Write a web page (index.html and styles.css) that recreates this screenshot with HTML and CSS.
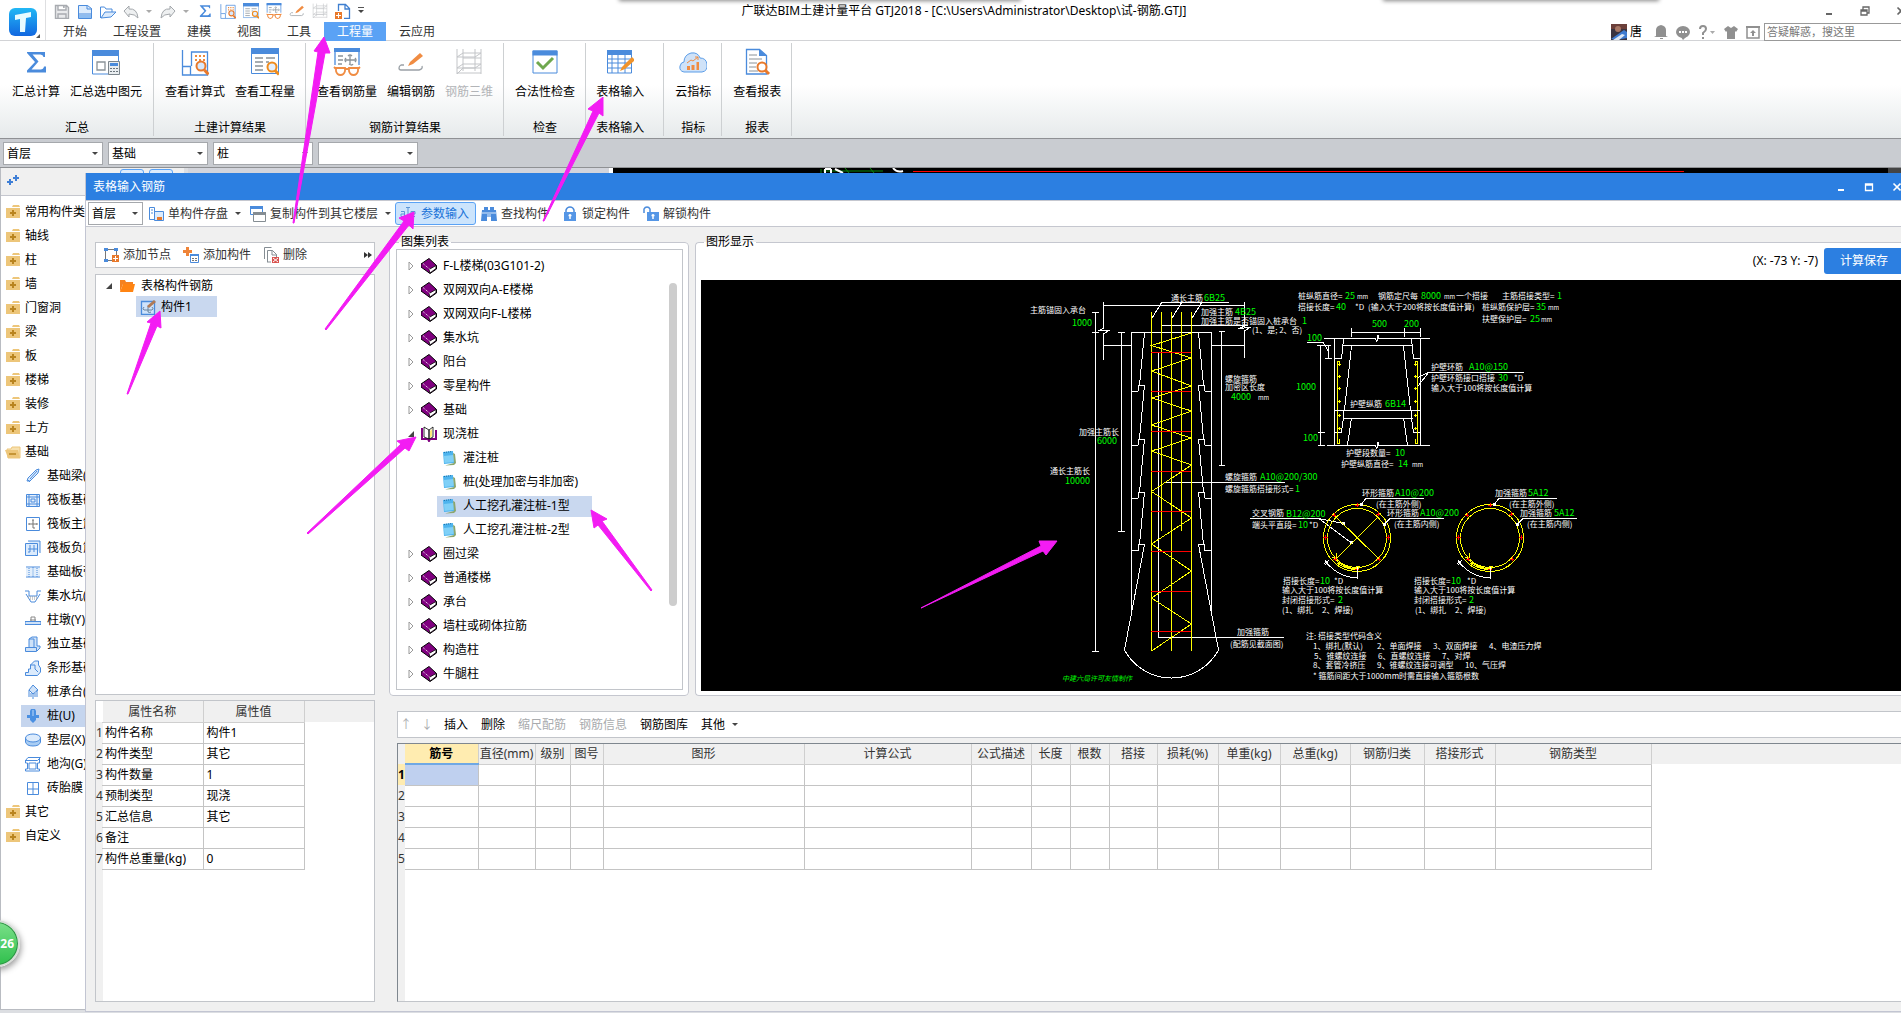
FILE: index.html
```
<!DOCTYPE html>
<html lang="zh-CN">
<head>
    <meta charset="UTF-8">
    <meta name="viewport" content="width=device-width, initial-scale=1.0">
    <title>广联达BIM土建计量平台 GTJ2018</title>
    <link rel="stylesheet" href="styles.css">
</head>
<body>
    <!-- icon library -->
    <svg class="defs" aria-hidden="true">
        <symbol id="i-sigma" viewBox="0 0 28 28"><path d="M5 4h18v5h-1.500q-.5-2.500-3-2.500h-8l6 7-7 8h9q3 0 3.500-3H24v6H5v-2l8-8.500-8-9z" fill="#4a8bdc"/></symbol>
        <symbol id="i-sumsel" viewBox="0 0 28 28"><path d="M.5 2.500h26V26h-26z" fill="#fff" stroke="#4a8bdc"/><path d="M0 2h27v6H0z" fill="#4a8bdc"/><path d="M5 14h8v8H5z" fill="none" stroke="#8a9298" stroke-width="1.300"/><path d="M16.500 13.500h11v13h-11z" fill="#e9edf0" stroke="#7b858c"/><path d="M18 15h8v3h-8z" fill="#4a8bdc"/><path d="M18 20h2v1h-2zm3 0h2v1h-2zm3 0h2v1h-2zm-6 3h2v1h-2zm3 0h2v1h-2zm3 0h2v1h-2z" fill="#6b757c"/></symbol>
        <symbol id="i-formula" viewBox="0 0 28 28"><path d="M1.500 2v25h25V4H10.500v14M2 18.500h7.500v8" fill="none" stroke="#4a8bdc" stroke-width="1.300"/><path d="M14 7h2v2h-2zm4 0h2v2h-2zm4 0h2v2h-2zm-8 4h2v2h-2zm4 0h2v2h-2zm4 0h2v2h-2z" fill="#ef8a3c"/><circle cx="20" cy="18" r="4.500" fill="#d8e8fb" stroke="#e8792b" stroke-width="2"/><path d="M23.500 22l4 4.500" stroke="#e8792b" stroke-width="3"/></symbol>
        <symbol id="i-quantity" viewBox="0 0 28 28"><path d="M.5.500h27v25H.5z" fill="#fff" stroke="#4a8bdc"/><path d="M0 0h28v6H0z" fill="#4a8bdc"/><path d="M4 10h8M4 14h8M4 18h8M4 22h8M15 10h9M15 14h3" stroke="#8a9298" stroke-width="1.300"/><circle cx="21" cy="19" r="4.500" fill="#e3f0ff" stroke="#ef8c1e" stroke-width="2"/><path d="M24 22.500l4 4" stroke="#ef8c1e" stroke-width="3"/></symbol>
        <symbol id="i-glasses" viewBox="0 0 28 28"><path d="M2 17V1h24v16" fill="#fff" stroke="#4a8bdc" stroke-width="1.300"/><path d="M1 0h26v4H1z" fill="#4a8bdc"/><path d="M5 8h5M5 12h5M5 16h4M17 8v8M13 12h9m-9-2q-2 2 0 4m9-4q2 2 0 4m-7-6q2-2 4 0m-3 8q3 2 4 0" stroke="#8a9298" stroke-width="1.300" fill="none"/><path d="M3 20h9v3q-1 4-4.500 4T3 23zm13 0h9v3q-1 4-4.500 4T16 23zm-4 1h4M3 21l-2-2m24 2l2-2" fill="#fff" stroke="#f08c42" stroke-width="1.800"/></symbol>
        <symbol id="i-editbar" viewBox="0 0 28 28"><path d="M7 17H4q-2 1-2 3t2 2h18q4-1 3-4" fill="none" stroke="#9aa0a6" stroke-width="1.300"/><path d="M11 18l2-4L23 5l3 3-10 8z" fill="#f08c42"/></symbol>
        <symbol id="i-mesh" viewBox="0 0 28 28"><path d="M2 1v25M8 1v22M20 1v22M26 1v25M2 9l6-4h18M2 20l6-4h18M2 9h18l6-4M2 20h18l6-4M2 25h24M8 10h18M2 26l6-6h18" fill="none" stroke="#c3c5c8" stroke-width="1"/></symbol>
        <symbol id="i-check" viewBox="0 0 28 28"><path d="M2 3h24v22H2z" fill="#fff" stroke="#4a8bdc"/><path d="M1.500 2.500h25v5h-25z" fill="#4a8bdc"/><path d="M6 14l6 6L22 10" fill="none" stroke="#6fa84f" stroke-width="3"/></symbol>
        <symbol id="i-sheet" viewBox="0 0 28 28"><path d="M1.500 3h24v22h-24zM6 3v22M12 3v22M19 3v22M1 11h25M1 15h25M1 20h25" fill="#fff" stroke="#4a8bdc"/><path d="M1 2h25v5H1z" fill="#4a8bdc"/><path d="M14 23l2-4L26 9l3 3-10 9z" fill="#f0932b"/></symbol>
        <symbol id="i-cloud" viewBox="0 0 28 28"><path d="M5 24q-5-1-4-6 1-4 4-4 0-7 7-9 7-1 9 5 6 0 7 6 1 7-5 8z" fill="#cfe2f8" stroke="#5b9de8"/><path d="M8 22v-4h3v4zm4.500 0v-5h3v5zm5 0v-8h2.500v8z" fill="#f08c42"/><path d="M8 15l4-3 2 1 5-4m-3 0h3v3" fill="none" stroke="#f08c42"/></symbol>
        <symbol id="i-report" viewBox="0 0 28 28"><path d="M3.500 1.500h13l7 6V26h-20z" fill="#fff" stroke="#4a8bdc" stroke-width="1.300"/><path d="M16 1l8 7h-8z" fill="#4a8bdc"/><path d="M6 7h8M6 11h13M6 15h8M6 19h7M6 23h9" stroke="#8a9298"/><circle cx="19" cy="19" r="4.500" fill="#fff" stroke="#e8792b" stroke-width="2"/><path d="M22 22l4 4" stroke="#e8792b" stroke-width="3"/></symbol>
        <symbol id="i-save" viewBox="0 0 16 16"><path d="M1.500 2.500h11l2 2v11h-13zM4 2v5h8V2M4 15v-4h8v4M9 4h1v1" fill="#e9eaec" stroke="#a8abb0" stroke-width="1.400"/></symbol>
        <symbol id="i-new" viewBox="0 0 16 16"><path d="M1.500 2.500h9l4 3v10h-13z" fill="#dcebfc" stroke="#4a8bdc"/><path d="M10 2v4h5M2 11h13" fill="none" stroke="#4a8bdc"/><path d="M2 12h12v3H2z" fill="#8dbcf0"/></symbol>
        <symbol id="i-open" viewBox="0 0 16 16"><path d="M.5 15V4h4l1.500 2h6v3" fill="none" stroke="#4a8bdc"/><path d="M1 15l4-6h11l-5 5z" fill="#dcebfc" stroke="#4a8bdc"/></symbol>
        <symbol id="i-undo" viewBox="0 0 16 16"><path d="M1 8l5-5v3q8-1 9 9-3-4-9-4v3z" fill="#eef0f1" stroke="#a3a7ab"/></symbol>
        <symbol id="i-redo" viewBox="0 0 16 16"><path d="M15 8l-5-5v3Q2 5 1 15q3-4 9-4v3z" fill="#eef0f1" stroke="#a3a7ab"/></symbol>
        <symbol id="i-adddoc" viewBox="0 0 16 16"><path d="M3.500 8V1.500h7l4 4v10H9M10 1v5h5" fill="none" stroke="#3f7fd0" stroke-width="1.300"/><path d="M0 9h7v7H0z" fill="#e8792b"/><path d="M3.500 10v5M1 12.500h5" stroke="#fff"/></symbol>
        <symbol id="i-folder" viewBox="0 0 16 16"><path d="M1 4h14v10H1zM8 1h6l1 2H7z" fill="#edc67a"/><path d="M8 6v6M5 9h6" stroke="#b98420" stroke-width="2"/></symbol>
        <symbol id="i-folder-open" viewBox="0 0 16 16"><path d="M2 5h4l1-2h8v11H3z" fill="#f7e0ae" stroke="#edc67a"/><path d="M0 6h13l2 8H3z" fill="#edc67a"/><path d="M4 10h7" stroke="#b98420" stroke-width="1.500"/></symbol>
        <symbol id="i-beam" viewBox="0 0 16 16"><path d="M2 13l1-3 8-8 3-1-1 4-8 8zM2 11l3 3M5 11l7-8" fill="#dcebfc" stroke="#4a8bdc"/></symbol>
        <symbol id="i-raft" viewBox="0 0 16 16"><path d="M1.500 2.500h13v12h-13zM4 2v13M12 2v13M1 5h14M1 12h14M6 7h4v3H6z" fill="#e6f0fc" stroke="#4a8bdc"/></symbol>
        <symbol id="i-main" viewBox="0 0 16 16"><path d="M1.500 1.500h13v13h-13z" fill="#fff" stroke="#4a8bdc"/><path d="M8 4v8M4 8h8M4 7v2m8-2v2M7 4h2m-1 8h2" stroke="#777" fill="none"/></symbol>
        <symbol id="i-neg" viewBox="0 0 16 16"><path d="M.5 3.500h12v12H.5zM3 1h12v12" fill="#dcebfc" stroke="#4a8bdc"/><path d="M5 5v7M9 5v7M3 9h9m-7 3H3" stroke="#4a8bdc"/></symbol>
        <symbol id="i-strip" viewBox="0 0 16 16"><path d="M1 3h14M1 13h14M8 3v10" stroke="#4a8bdc"/><path d="M1 4h14v8H1z" fill="#cfe2f8" opacity=".6"/><path d="M4 4v9m8-9v9" stroke="#4a8bdc" stroke-dasharray="1 1"/></symbol>
        <symbol id="i-pit" viewBox="0 0 16 16"><path d="M0 3h4v5h8V3h4M1 6l5 8h4l5-8" fill="none" stroke="#4a8bdc"/><path d="M3 9h10M5 11h7" stroke="#999" stroke-dasharray="1 1"/></symbol>
        <symbol id="i-pier" viewBox="0 0 16 16"><path d="M0 9.500h16v3H0z" fill="#cfe2f8" stroke="#4a8bdc"/><path d="M6 9V5h4v4M5 8h6" fill="none" stroke="#888"/></symbol>
        <symbol id="i-found" viewBox="0 0 16 16"><path d="M.5 11.500h11v4H.5zM4 11V3l3-2h5v9h3v2l-3 3M4 3h5v8" fill="#cfe2f8" stroke="#4a8bdc"/></symbol>
        <symbol id="i-bar" viewBox="0 0 16 16"><path d="M.5 15.500v-3h3V9h2V5l4-4h4v4l2 3v4l-3 3.500zM5 5h5v4l3 3" fill="#dcebfc" stroke="#4a8bdc"/></symbol>
        <symbol id="i-cap" viewBox="0 0 16 16"><path d="M8 1l5 5-5 4-4-4zM8 9v6M4 6v7m8-7v7M6 9v4m4-4v4" fill="#cfe2f8" stroke="#4a8bdc"/></symbol>
        <symbol id="i-pile" viewBox="0 0 16 16"><path d="M6 1h4l1 2v4h3v3h-3v2l-3 3-3-3v-2H2V7h3V3z" fill="#4a90e2"/><path d="M8 2v6" stroke="#bcd8f8"/></symbol>
        <symbol id="i-pad" viewBox="0 0 16 16"><path d="M.5 6v4q1 4 7.500 4t7.500-4V6" fill="#a9cdf3" stroke="#4a8bdc"/><ellipse cx="8" cy="6" rx="7.500" ry="4" fill="#dcebfc" stroke="#4a8bdc"/></symbol>
        <symbol id="i-ditch" viewBox="0 0 16 16"><path d="M.5 4.500L3 1.500h12.500l-3 3zM.5 4v3h2v6h-2v2h14v-2h-2V7h2V2M4 7h7v6H4z" fill="#fff" stroke="#4a8bdc"/></symbol>
        <symbol id="i-brick" viewBox="0 0 16 16"><path d="M2.500 2.500h11v12h-11zM8 2v12M2 9h12" fill="#fff" stroke="#4a8bdc"/></symbol>
        <symbol id="i-savecomp" viewBox="0 0 16 16"><path d="M1.500 1.500h5v12h-5zM3 4h2M3 7h2" fill="#fff" stroke="#4a8bdc"/><path d="M6.500 5.500h9v9h-9z" fill="#dcebfc" stroke="#4a8bdc"/><path d="M9 11h5v3H9z" fill="#e8792b"/></symbol>
        <symbol id="i-copy" viewBox="0 0 16 16"><path d="M.5.500h12v8H.5z" fill="#fff" stroke="#4a8bdc"/><path d="M0 0h13v3H0z" fill="#4a8bdc"/><path d="M3.500 6.500h12v9h-12z" fill="#fff" stroke="#858d93"/><path d="M3 6h13v3H3z" fill="#858d93"/></symbol>
        <symbol id="i-caret-text" viewBox="0 0 16 16"><path d="M1 5.500h3.500v5H1V8h3M10.500 8H15V5.500h-4v5h4M6 1.500h4M8 1.500v12M6 13.500h4" fill="none" stroke="#5b95d6"/></symbol>
        <symbol id="i-find" viewBox="0 0 16 16"><path d="M3 1h4v3h2V1h4v3h2l1 11h-6v-4H6v4H0L1 4h2z" fill="#4a8bdc"/><path d="M1 7h14M7 8v3m2-3v3" stroke="#dcebfc"/></symbol>
        <symbol id="i-lock" viewBox="0 0 16 16"><path d="M4 7V4q1-3 4-3t4 3v3" fill="none" stroke="#4a8bdc" stroke-width="1.500"/><path d="M2 6h12v9H2z" fill="#5596e6"/><path d="M8 8v5M6.500 9.500h3" stroke="#fff" stroke-width="1.500"/></symbol>
        <symbol id="i-unlock" viewBox="0 0 16 16"><path d="M1 7V3q1-2 3-2t3 2v4" fill="none" stroke="#4a8bdc" stroke-width="1.500"/><path d="M4 6h12v9H4z" fill="#5596e6"/><path d="M10 8v5M8.500 9.500h3" stroke="#fff" stroke-width="1.500"/></symbol>
        <symbol id="i-addnode" viewBox="0 0 16 16"><path d="M2.500 2.500h11v11h-11z" fill="none" stroke="#777"/><path d="M1 1h4v3H1zm10 0h4v3h-4zM1 12h4v3H1z" fill="#4a8bdc"/><path d="M9 8h7v7H9z" fill="#e8792b"/><path d="M12.500 9v5M10 11.500h5" stroke="#fff"/></symbol>
        <symbol id="i-addcomp" viewBox="0 0 16 16"><path d="M3 0h3v3h3v3H6v3H3V6H0V3h3z" fill="#ef8438"/><path d="M7.500 7.500h8v8h-8z" fill="#fff" stroke="#4a8bdc"/><path d="M7 7h9v2H7z" fill="#4a8bdc"/><path d="M9 11.500h5M9 13.500h5" stroke="#777" stroke-dasharray="2 1"/></symbol>
        <symbol id="i-del" viewBox="0 0 16 16"><path d="M1.500 12V.5h7M4.500 15V3.500h5l4 4V10M9 3v5h5M4 15h4" fill="none" stroke="#858d93"/><path d="M9 10h7v6H9z" fill="#d9534f"/><path d="M10 11l5 4m0-4l-5 4" stroke="#fff"/></symbol>
        <symbol id="i-orange" viewBox="0 0 16 16"><path d="M1 14V2h5l1 2h7v2H4z" fill="#f58220"/><path d="M4 6h12l-2 8H1z" fill="#ff8412"/></symbol>
        <symbol id="i-comp" viewBox="0 0 16 16"><path d="M1.500 2.500h13v13h-13z" fill="#cfe3fb" stroke="#4a8bdc" stroke-width="1.300"/><path d="M4 8q-2 2 0 3h8q2-1 0-3M8 7v6q2 1 3 0" fill="none" stroke="#68839c"/><path d="M7 7l7-6 2 2-7 6z" fill="#b07a56"/></symbol>
        <symbol id="i-book" viewBox="0 0 16 16"><path d="M0 6l8-5.500 7.500 7V11L9 15.500 0 9z" fill="#800080" stroke="#000"/><path d="M8 11.500l7-4v3L9 15z" fill="#fff" stroke="#000" stroke-width=".8"/><path d="M2 5.500l7 6" stroke="#fff" stroke-dasharray="1 1"/></symbol>
        <symbol id="i-bookopen" viewBox="0 0 16 16"><path d="M1 2v11h6l1 2 1-2h6V4" fill="#fff" stroke="#800080" stroke-width="2"/><path d="M3 1l5 3v9l-5-2zM8 4l4-3v10l-4 2z" fill="#fff" stroke="#000" stroke-width=".8"/><path d="M9 5l2-2v7l-2 2z" fill="#ffe97a"/></symbol>
        <symbol id="i-note" viewBox="0 0 16 16"><path d="M1 2l10-1 1 12-10 1z" fill="#4db4ee"/><path d="M11 3l2 1 1 9-2 2-9 .5L12 13z" fill="#8aa66f"/><path d="M2 6l9-1 .5 7-9 1z" fill="#7fd0f7"/><path d="M2 2.500l8-1" stroke="#1d6fa8" stroke-dasharray="1 1"/></symbol>
        <symbol id="i-right" viewBox="0 0 8 10"><path d="M2 1l4 4-4 4z" fill="#fff" stroke="#999"/></symbol>
        <symbol id="i-down" viewBox="0 0 8 10"><path d="M7 2v6H1z" fill="#444"/></symbol>
        <symbol id="i-min" viewBox="0 0 10 10"><path d="M2 7h6v2H2z" fill="currentColor"/></symbol>
        <symbol id="i-max" viewBox="0 0 10 10"><path d="M1.500 2h7v6.500h-7zM1 3h8" fill="none" stroke="currentColor" stroke-width="1.300"/></symbol>
        <symbol id="i-restore" viewBox="0 0 10 10"><path d="M1 4h6v5H1zM3 4V1h6v6H7M1 5h6" fill="none" stroke="currentColor" stroke-width="1.300"/></symbol>
        <symbol id="i-close" viewBox="0 0 10 10"><path d="M1.500 1.500l7 7M8.500 1.500l-7 7" stroke="currentColor" stroke-width="1.600"/></symbol>
    </svg>

    <div class="app">
        <div class="float-shadow shadow-left"></div>
        <div class="float-shadow shadow-right"></div>
        <header class="header">
            <button class="logo" aria-label="菜单">
                <svg viewBox="0 0 32 32">
                    <defs><linearGradient id="lg" x1="0" y1="0" x2="0" y2="1"><stop offset="0" stop-color="#22b8f5"/><stop offset="1" stop-color="#1167e0"/></linearGradient></defs>
                    <rect x="1" y="2" width="28" height="28" rx="6" fill="url(#lg)"/>
                    <path d="M7 9l16-3v5l-5 1-1 14h-5V13l-5 1z" fill="#e8fbff"/>
                    <path d="M32 28v4h-4z" fill="#555"/>
                </svg>
            </button>
            <div class="header-main">
                <div class="title-row">
                    <div class="quick">
                        <button aria-label="保存"><svg><use href="#i-save"/></svg></button>
                        <button aria-label="新建"><svg><use href="#i-new"/></svg></button>
                        <button aria-label="打开"><svg><use href="#i-open"/></svg></button>
                        <button aria-label="撤销"><svg><use href="#i-undo"/></svg></button>
                        <i class="caret pale"></i>
                        <button aria-label="恢复"><svg><use href="#i-redo"/></svg></button>
                        <i class="caret pale"></i>
                        <button aria-label="汇总"><svg><use href="#i-sigma"/></svg></button>
                        <button aria-label="查看计算式"><svg><use href="#i-formula"/></svg></button>
                        <button aria-label="查看工程量"><svg><use href="#i-quantity"/></svg></button>
                        <button aria-label="查看钢筋量"><svg><use href="#i-glasses"/></svg></button>
                        <button aria-label="编辑钢筋"><svg><use href="#i-editbar"/></svg></button>
                        <button aria-label="钢筋三维"><svg><use href="#i-mesh"/></svg></button>
                        <button aria-label="添加"><svg><use href="#i-adddoc"/></svg></button>
                        <i class="caret lined"></i>
                    </div>
                    <div class="title">广联达BIM土建计量平台 GTJ2018 - [C:\Users\Administrator\Desktop\试-钢筋.GTJ]</div>
                    <div class="window-buttons">
                        <button aria-label="最小化"><svg><use href="#i-min"/></svg></button>
                        <button aria-label="还原"><svg><use href="#i-restore"/></svg></button>
                        <button aria-label="关闭"><svg><use href="#i-close"/></svg></button>
                    </div>
                </div>
                <div class="tab-row">
                    <nav class="tabs">
                        <a href="#">开始</a>
                        <a href="#">工程设置</a>
                        <a href="#">建模</a>
                        <a href="#">视图</a>
                        <a href="#">工具</a>
                        <a href="#" class="active">工程量</a>
                        <a href="#">云应用</a>
                    </nav>
                    <div class="user-tools">
                        <svg width="16" height="16" viewBox="0 0 16 16"><path d="M0 0h16v16H0z" fill="#3a3440"/><path d="M0 0h16v5H0z" fill="#6b3f3a"/><circle cx="7" cy="5" r="3" fill="#a87866"/><path d="M0 15L13 6l3 2v6L6 16z" fill="#3f7bd0"/><path d="M2 16l9-6 3 1-6 5z" fill="#dfe8f4"/></svg>
                        <span class="user-name">唐</span>
                        <button aria-label="通知"><svg width="14" height="16" viewBox="0 0 14 16"><path d="M2 12V6q0-4 5-5 5 1 5 5v6l2 1H0zm4 2h3v1H6z" fill="#909090"/></svg></button>
                        <button aria-label="消息"><svg width="14" height="16" viewBox="0 0 14 16"><ellipse cx="7" cy="8" rx="7" ry="6" fill="#909090"/><path d="M5 13h5l-3 3z" fill="#909090"/><path d="M3 7h2v2H3zm3 0h2v2H6zm3 0h2v2H9z" fill="#fff"/></svg></button>
                        <button aria-label="帮助"><svg width="18" height="16" viewBox="0 0 18 16"><path d="M2 5q0-3 3-3t3 3q0 2-3 4v2m0 2v2" fill="none" stroke="#909090" stroke-width="2"/><path d="M12 7h5l-2.500 3z" fill="#aaa"/></svg></button>
                        <button aria-label="皮肤"><svg width="14" height="16" viewBox="0 0 14 16"><path d="M4 2l3 2 3-2 4 3-2 3-1-1v8H3V7L2 8 0 5z" fill="#909090"/></svg></button>
                        <button aria-label="收起"><svg width="14" height="16" viewBox="0 0 14 16"><path d="M1 3h12v11H1z" fill="none" stroke="#909090" stroke-width="1.500"/><path d="M0 2h14v2H0zM7 6l3 3H8v3H6V9H4z" fill="#909090"/></svg></button>
                        <input type="text" class="search" placeholder="答疑解惑，搜这里" aria-label="搜索">
                    </div>
                </div>
            </div>
        </header>

        <div class="ribbon">
            <section class="group first">
                <div class="tools">
                    <button><svg><use href="#i-sigma"/></svg>汇总计算</button>
                    <button><svg><use href="#i-sumsel"/></svg>汇总选中图元</button>
                </div>
                <h2>汇总</h2>
            </section>
            <section class="group">
                <div class="tools">
                    <button><svg><use href="#i-formula"/></svg>查看计算式</button>
                    <button><svg><use href="#i-quantity"/></svg>查看工程量</button>
                </div>
                <h2>土建计算结果</h2>
            </section>
            <section class="group">
                <div class="tools">
                    <button><svg><use href="#i-glasses"/></svg>查看钢筋量</button>
                    <button><svg><use href="#i-editbar"/></svg>编辑钢筋</button>
                    <button disabled><svg><use href="#i-mesh"/></svg>钢筋三维</button>
                </div>
                <h2>钢筋计算结果</h2>
            </section>
            <section class="group">
                <div class="tools"><button><svg><use href="#i-check"/></svg>合法性检查</button></div>
                <h2>检查</h2>
            </section>
            <section class="group wide">
                <div class="tools"><button><svg><use href="#i-sheet"/></svg>表格输入</button></div>
                <h2>表格输入</h2>
            </section>
            <section class="group">
                <div class="tools"><button><svg><use href="#i-cloud"/></svg>云指标</button></div>
                <h2>指标</h2>
            </section>
            <section class="group">
                <div class="tools"><button><svg><use href="#i-report"/></svg>查看报表</button></div>
                <h2>报表</h2>
            </section>
        </div>

        <div class="context-bar">
            <label class="combo"><select aria-label="楼层"><option>首层</option></select></label>
            <label class="combo"><select aria-label="构件大类"><option>基础</option></select></label>
            <label class="combo"><select aria-label="构件类型"><option>桩</option></select></label>
            <label class="combo"><select aria-label="构件"><option></option></select></label>
        </div>

        <main class="workspace">
            <aside class="sidebar">
                <div class="sidebar-head">
                    <svg width="14" height="14" viewBox="0 0 14 14"><path d="M4 5v6M1 8h6M10 1v6M7 4h6" stroke="#3f7fd6" stroke-width="2"/></svg>
                    <span class="mode"></span><span class="mode"></span>
                </div>
                <ul class="categories">
                    <li><svg><use href="#i-folder"/></svg>常用构件类</li>
                    <li><svg><use href="#i-folder"/></svg>轴线</li>
                    <li><svg><use href="#i-folder"/></svg>柱</li>
                    <li><svg><use href="#i-folder"/></svg>墙</li>
                    <li><svg><use href="#i-folder"/></svg>门窗洞</li>
                    <li><svg><use href="#i-folder"/></svg>梁</li>
                    <li><svg><use href="#i-folder"/></svg>板</li>
                    <li><svg><use href="#i-folder"/></svg>楼梯</li>
                    <li><svg><use href="#i-folder"/></svg>装修</li>
                    <li><svg><use href="#i-folder"/></svg>土方</li>
                    <li><svg><use href="#i-folder-open"/></svg>基础</li>
                    <li class="sub"><svg><use href="#i-beam"/></svg>基础梁(F)</li>
                    <li class="sub"><svg><use href="#i-raft"/></svg>筏板基础(M)</li>
                    <li class="sub"><svg><use href="#i-main"/></svg>筏板主筋(R)</li>
                    <li class="sub"><svg><use href="#i-neg"/></svg>筏板负筋(X)</li>
                    <li class="sub"><svg><use href="#i-strip"/></svg>基础板带(W)</li>
                    <li class="sub"><svg><use href="#i-pit"/></svg>集水坑(K)</li>
                    <li class="sub"><svg><use href="#i-pier"/></svg>柱墩(Y)</li>
                    <li class="sub"><svg><use href="#i-found"/></svg>独立基础(D)</li>
                    <li class="sub"><svg><use href="#i-bar"/></svg>条形基础(T)</li>
                    <li class="sub"><svg><use href="#i-cap"/></svg>桩承台(V)</li>
                    <li class="sub selected"><svg><use href="#i-pile"/></svg>桩(U)</li>
                    <li class="sub"><svg><use href="#i-pad"/></svg>垫层(X)</li>
                    <li class="sub"><svg><use href="#i-ditch"/></svg>地沟(G)</li>
                    <li class="sub"><svg><use href="#i-brick"/></svg>砖胎膜</li>
                    <li><svg><use href="#i-folder"/></svg>其它</li>
                    <li><svg><use href="#i-folder"/></svg>自定义</li>
                </ul>
            </aside>
            <div class="list-panel"></div>
            <div class="model-view">
                <svg width="1275" height="5" viewBox="0 0 1275 5">
                    <path d="M208 1v4M210 3h60M232 0l4 5M257 0l4 5" stroke="#0a8a0a" fill="none"/>
                    <path d="M212 1h6M212 1v4M218 1v4M222 1l8 4M280 0q4 5 10 3" stroke="#fff" stroke-width="2" fill="none"/>
                    <path d="M300 3.500h771" stroke="#f00"/>
                </svg>
            </div>
        </main>
    </div>

    <!-- 表格输入钢筋 window -->
    <section class="dialog">
        <div class="dialog-title">
            <h1>表格输入钢筋</h1>
            <div class="dialog-buttons">
                <button aria-label="最小化"><svg><use href="#i-min"/></svg></button>
                <button aria-label="最大化"><svg><use href="#i-max"/></svg></button>
                <button aria-label="关闭"><svg><use href="#i-close"/></svg></button>
            </div>
        </div>
        <div class="dialog-tools">
            <label class="combo small"><select aria-label="楼层"><option>首层</option></select></label>
            <button><svg><use href="#i-savecomp"/></svg>单构件存盘<i class="caret"></i></button>
            <button><svg><use href="#i-copy"/></svg>复制构件到其它楼层<i class="caret"></i></button>
            <button class="on"><svg><use href="#i-caret-text"/></svg>参数输入</button>
            <button class="lone"><svg><use href="#i-find"/></svg>查找构件</button>
            <button class="lone"><svg><use href="#i-lock"/></svg>锁定构件</button>
            <button class="lone"><svg><use href="#i-unlock"/></svg>解锁构件</button>
        </div>
        <div class="dialog-body">
            <div class="left-col">
                <div class="box node-tools">
                    <button><svg><use href="#i-addnode"/></svg>添加节点</button>
                    <button><svg><use href="#i-addcomp"/></svg>添加构件</button>
                    <button><svg><use href="#i-del"/></svg>删除</button>
                    <svg class="more" width="8" height="8" viewBox="0 0 8 8"><path d="M0 1l4 3-4 3zM4 1l4 3-4 3z" fill="#333"/></svg>
                </div>
                <div class="box comp-tree">
                    <div class="node root"><svg class="twist"><use href="#i-down"/></svg><svg><use href="#i-orange"/></svg>表格构件钢筋</div>
                    <div class="node child"><svg><use href="#i-comp"/></svg>构件1</div>
                </div>
                <div class="box props">
                    <table>
                        <colgroup><col class="c-no"><col class="c-name"><col class="c-value"></colgroup>
                        <thead><tr><th></th><th>属性名称</th><th>属性值</th></tr></thead>
                        <tbody>
                            <tr><th>1</th><td>构件名称</td><td>构件1</td></tr>
                            <tr><th>2</th><td>构件类型</td><td>其它</td></tr>
                            <tr><th>3</th><td>构件数量</td><td>1</td></tr>
                            <tr><th>4</th><td>预制类型</td><td>现浇</td></tr>
                            <tr><th>5</th><td>汇总信息</td><td>其它</td></tr>
                            <tr><th>6</th><td>备注</td><td></td></tr>
                            <tr><th>7</th><td>构件总重量(kg)</td><td>0</td></tr>
                        </tbody>
                    </table>
                </div>
            </div>
            <div class="right-col">
                <div class="upper">
                    <fieldset class="atlas">
                        <legend>图集列表</legend>
                        <div class="atlas-box">
                            <ul>
                                <li><svg class="twist"><use href="#i-right"/></svg><svg><use href="#i-book"/></svg>F-L楼梯(03G101-2)</li>
                                <li><svg class="twist"><use href="#i-right"/></svg><svg><use href="#i-book"/></svg>双网双向A-E楼梯</li>
                                <li><svg class="twist"><use href="#i-right"/></svg><svg><use href="#i-book"/></svg>双网双向F-L楼梯</li>
                                <li><svg class="twist"><use href="#i-right"/></svg><svg><use href="#i-book"/></svg>集水坑</li>
                                <li><svg class="twist"><use href="#i-right"/></svg><svg><use href="#i-book"/></svg>阳台</li>
                                <li><svg class="twist"><use href="#i-right"/></svg><svg><use href="#i-book"/></svg>零星构件</li>
                                <li><svg class="twist"><use href="#i-right"/></svg><svg><use href="#i-book"/></svg>基础</li>
                                <li><svg class="twist"><use href="#i-down"/></svg><svg><use href="#i-bookopen"/></svg>现浇桩</li>
                                <li class="leaf"><span><svg><use href="#i-note"/></svg>灌注桩</span></li>
                                <li class="leaf"><span><svg><use href="#i-note"/></svg>桩(处理加密与非加密)</span></li>
                                <li class="leaf selected"><span><svg><use href="#i-note"/></svg>人工挖孔灌注桩-1型</span></li>
                                <li class="leaf"><span><svg><use href="#i-note"/></svg>人工挖孔灌注桩-2型</span></li>
                                <li><svg class="twist"><use href="#i-right"/></svg><svg><use href="#i-book"/></svg>圈过梁</li>
                                <li><svg class="twist"><use href="#i-right"/></svg><svg><use href="#i-book"/></svg>普通楼梯</li>
                                <li><svg class="twist"><use href="#i-right"/></svg><svg><use href="#i-book"/></svg>承台</li>
                                <li><svg class="twist"><use href="#i-right"/></svg><svg><use href="#i-book"/></svg>墙柱或砌体拉筋</li>
                                <li><svg class="twist"><use href="#i-right"/></svg><svg><use href="#i-book"/></svg>构造柱</li>
                                <li><svg class="twist"><use href="#i-right"/></svg><svg><use href="#i-book"/></svg>牛腿柱</li>
                            </ul>
                            <div class="scroll"><div class="thumb"></div></div>
                        </div>
                    </fieldset>
                    <fieldset class="figure">
                        <legend>图形显示</legend>
                        <div class="figure-head">
                            <span>(X: -73 Y: -7)</span>
                            <button class="primary">计算保存</button>
                        </div>
                        <div class="canvas">
                            <svg class="cad" width="1201" height="411" viewBox="700 280 1201 411">
                                <defs>
                                    <!-- half of the pile casing, mirrored for the other side -->
                                    <g id="casing">
                                        <path d="M1130.500 610V332.500H1170M1143.500 333l-5 52M1143.500 385h-5.500l-1 6h-6.500M1143.500 385l-5 54M1143.500 439h-5.500l-1 6h-6.500M1143.500 439l-5 53M1143.500 492h-5.500l-1 6h-6.500M1143.500 492l-5 53M1143.500 544.500h-5.500l-1 6h-6.500M1143.500 544.500l-20 105.500"/>
                                    </g>
                                    <g id="wall">
                                        <path d="M1333.500 338v107M1342.500 339l-2 19.500h-7M1350.500 346l-7 64M1342.500 410v8M1342.500 418l-2 14h-7M1350.500 418l-4 27"/>
                                        <path class="y" d="M1336.500 361v82h2v-4M1336.500 361h2v3M1337 364h3M1337 376.500h3M1337 388.500h3M1337 401.500h3M1337 415.500h3M1337 428.500h3M1338.500 363v3M1338.500 375v3M1338.500 387v3M1338.500 400v3M1338.500 414v3M1338.500 427v3"/>
                                    </g>
                                    <g id="ring">
                                        <circle class="y" cx="1356" cy="538" r="33.500"/>
                                        <circle class="y" cx="1356" cy="538" r="29.500"/>
                                        <path class="y" d="M1332 557q10 12 26 12M1331 557h4v-4M1355 566h4l-2 4M1336 563q8 6 20 7"/>
                                        <path class="r" d="M1354 505h4M1356 503v4M1375 514.500h4M1377 512v4M1385 537.500h4M1387 535v5M1376 559.500h4M1378.500 557v4M1354 569.500h4M1356 567v4M1332 559.500h4M1334 557v4M1322 537.500h5M1324.500 535v5M1331 515.500h4M1333 513v4"/>
                                        <path d="M1325 562q12 15 31.500 16M1323 564l4-3M1327 565l-3-5M1356.500 567v12M1328 560l-4 5M1365 498.500l-5 6M1389 518.500l-6 6M1365 498.500h58M1389 518.500h54"/>
                                        <path class="dot" d="M1359 503h3v3h-3zM1382 523h3v3h-3z"/>
                                    </g>
                                </defs>
                                <g class="w">
                                    <use href="#casing"/>
                                    <use href="#casing" transform="translate(2341 0) scale(-1 1)"/>
                                    <path d="M1123.500 650A53.400 53.400 0 0 0 1217.500 650"/>
                                    <path d="M1102 305.500h142M1102.500 302v26l-5 3 11-1-6 4v26M1243.500 302v24l-6 3 12-2-6 4v27M1102 345.500h28M1211 345.500h32"/>
                                    <path d="M1094.500 312v339M1091 312.500h7M1091 332.500h7M1091 651.500h7M1120.500 332v199M1117 332.500h7M1117 531.500h7M1220.500 331v134M1218 331.500h6M1218 465.500h6"/>
                                    <path d="M1160 302.500h68M1161 302l-10 16M1181 302l-10 16M1201 302l-10 16M1160 325.500h87M1157.500 352v285.500h125.500M1163 482.500h121"/>
                                    <path d="M1249 518.500h69M1318 518.500l24 5M1318 518.500l32 24M1428 372.500h95M1428 372l-12 6M1428 372l-11 14"/>
                                    <path class="dot" d="M1341 522h3v3h-3zM1349 541h3v3h-3z"/>
                                    <use href="#wall"/>
                                    <use href="#wall" transform="translate(2753 0) scale(-1 1)"/>
                                    <path d="M1350 332.500h70M1350.500 328v9M1403.500 328v9M1419.500 328v9M1323 338.500h51l2 3 1-6 1 3h51M1341 345.500h71M1334 410.500h85M1342 418.500h70M1326 445.500h48l2 3 1-6 1 3h51"/>
                                    <path d="M1319.500 345v100M1316 345.500h14M1317 432.500h7M1317 445.500h7M1327.500 345v13M1324 358.500h7M1306 342.500h16l5 8"/>
                                </g>
                                <path class="y" d="M1150.500 312v339M1190.500 312v339M1170.500 312v339M1160.500 312v219M1180.500 312v219"/>
                                <path class="y" d="M1190.500 333l-40 12.500 40 12.500-40 13 40 15-40 12 40 13-40 14 40 13-40 13 40 14-40 26.500 40 26.500-40 26 40 27-40 27 40 26-40 27"/>
                                <path class="r" d="M1150 352.500h40M1150 391.500h40M1150 431.500h40M1150 471.500h40M1150 511.500h40M1150 551.500h40M1150 591.500h40M1150 631.500h40"/>
                                <path class="y" d="M1377 517l-43 43M1333 515l46 45"/>
                                <g class="w">
                                    <use href="#ring"/>
                                    <use href="#ring" x="133"/>
                                </g>
                                <g class="note">
                                    <text x="1170" y="301">通长主筋</text>
                                    <text x="1029" y="313">主筋锚固入承台</text>
                                    <text x="1200" y="315">加强主筋</text>
                                    <text x="1200" y="324">加强主筋是否锚固入桩承台</text>
                                    <text x="1251" y="333">(1、是; 2、否)</text>
                                    <text x="1224" y="382">螺旋箍筋</text>
                                    <text x="1224" y="390">加密区长度</text>
                                    <text class="unit" x="1257" y="400">mm</text>
                                    <text x="1078" y="435">加强主筋长</text>
                                    <text x="1049" y="474">通长主筋长</text>
                                    <text x="1224" y="480">螺旋箍筋</text>
                                    <text x="1224" y="492">螺旋箍筋搭接形式=</text>
                                    <text x="1251" y="516">交叉钢筋</text>
                                    <text x="1251" y="528">端头平直段=</text>
                                    <text x="1308" y="528">*D</text>
                                    <text x="1236" y="635">加强箍筋</text>
                                    <text x="1229" y="647">(配筋见截面图)</text>
                                    <text x="1297" y="299">桩纵筋直径=</text>
                                    <text class="unit" x="1356" y="299">mm</text>
                                    <text x="1377" y="299">钢筋定尺每</text>
                                    <text class="unit" x="1443" y="299">mm</text>
                                    <text x="1455" y="299">一个搭接</text>
                                    <text x="1501" y="299">主筋搭接类型=</text>
                                    <text x="1297" y="310">搭接长度=</text>
                                    <text x="1354" y="310">*D</text>
                                    <text x="1367" y="310">(输入大于200将按长度值计算)</text>
                                    <text x="1481" y="310">桩纵筋保护层=</text>
                                    <text class="unit" x="1547" y="310">mm</text>
                                    <text x="1481" y="322">扶壁保护层=</text>
                                    <text class="unit" x="1540" y="322">mm</text>
                                    <text x="1349" y="407">护壁纵筋</text>
                                    <text x="1345" y="456">护壁段数量=</text>
                                    <text x="1340" y="467">护壁纵筋直径=</text>
                                    <text class="unit" x="1411" y="467">mm</text>
                                    <text x="1430" y="370">护壁环筋</text>
                                    <text x="1430" y="381">护壁环筋接口搭接</text>
                                    <text x="1513" y="381">*D</text>
                                    <text x="1430" y="391">输入大于100将按长度值计算</text>
                                    <text x="1361" y="496">环形箍筋</text>
                                    <text x="1375" y="507">(在主筋外侧)</text>
                                    <text x="1386" y="516">环形箍筋</text>
                                    <text x="1393" y="527">(在主筋内侧)</text>
                                    <text x="1494" y="496">加强箍筋</text>
                                    <text x="1508" y="507">(在主筋外侧)</text>
                                    <text x="1519" y="516">加强箍筋</text>
                                    <text x="1526" y="527">(在主筋内侧)</text>
                                    <text x="1282" y="584">搭接长度=</text>
                                    <text x="1333" y="584">*D</text>
                                    <text x="1281" y="593">输入大于100将按长度值计算</text>
                                    <text x="1281" y="603">封闭搭接形式=</text>
                                    <text x="1281" y="613">(1、绑扎</text>
                                    <text x="1321" y="613">2、焊接)</text>
                                    <text x="1413" y="584">搭接长度=</text>
                                    <text x="1466" y="584">*D</text>
                                    <text x="1413" y="593">输入大于100将按长度值计算</text>
                                    <text x="1413" y="603">封闭搭接形式=</text>
                                    <text x="1414" y="613">(1、绑扎</text>
                                    <text x="1454" y="613">2、焊接)</text>
                                    <text x="1305" y="639">注: 搭接类型代码含义</text>
                                    <text x="1312" y="649">1、绑扎(默认)</text>
                                    <text x="1376" y="649">2、单面焊接</text>
                                    <text x="1432" y="649">3、双面焊接</text>
                                    <text x="1488" y="649">4、电渣压力焊</text>
                                    <text x="1313" y="659">5、锥螺纹连接</text>
                                    <text x="1377" y="659">6、直螺纹连接</text>
                                    <text x="1441" y="659">7、对焊</text>
                                    <text x="1312" y="668">8、套管冷挤压</text>
                                    <text x="1376" y="668">9、锥螺纹连接可调型</text>
                                    <text x="1464" y="668">10、气压焊</text>
                                    <text x="1312" y="679">* 箍筋间距大于1000mm时需直接输入箍筋根数</text>
                                </g>
                                <g class="value">
                                    <text x="1203" y="301">6B25</text>
                                    <text x="1071" y="326">1000</text>
                                    <text x="1234" y="315">4B25</text>
                                    <text x="1301" y="324">1</text>
                                    <text x="1230" y="400">4000</text>
                                    <text x="1096" y="444">6000</text>
                                    <text x="1064" y="484">10000</text>
                                    <text x="1259" y="480">A10@200/300</text>
                                    <text x="1294" y="492">1</text>
                                    <text x="1285" y="517">B12@200</text>
                                    <text x="1297" y="528">10</text>
                                    <text x="1344" y="299">25</text>
                                    <text x="1420" y="299">8000</text>
                                    <text x="1556" y="299">1</text>
                                    <text x="1335" y="310">40</text>
                                    <text x="1535" y="310">35</text>
                                    <text x="1529" y="322">25</text>
                                    <text x="1371" y="327">500</text>
                                    <text x="1403" y="327">200</text>
                                    <text x="1306" y="341">100</text>
                                    <text x="1295" y="390">1000</text>
                                    <text x="1302" y="441">100</text>
                                    <text x="1384" y="407">6B14</text>
                                    <text x="1394" y="456">10</text>
                                    <text x="1397" y="467">14</text>
                                    <text x="1468" y="370">A10@150</text>
                                    <text x="1497" y="381">30</text>
                                    <text x="1394" y="496">A10@200</text>
                                    <text x="1419" y="516">A10@200</text>
                                    <text x="1527" y="496">5A12</text>
                                    <text x="1553" y="516">5A12</text>
                                    <text x="1319" y="584">10</text>
                                    <text x="1337" y="603">2</text>
                                    <text x="1450" y="584">10</text>
                                    <text x="1468" y="603">2</text>
                                    <text class="sign" x="1061" y="681">中建六局许可友情制作</text>
                                </g>
                            </svg>
                        </div>
                    </fieldset>
                </div>
                <div class="lower">
                    <div class="box row-tools">
                        <button class="arrow" disabled>↑</button>
                        <button class="arrow" disabled>↓</button>
                        <button>插入</button>
                        <button>删除</button>
                        <button disabled>缩尺配筋</button>
                        <button disabled>钢筋信息</button>
                        <button>钢筋图库</button>
                        <button>其他<i class="caret"></i></button>
                    </div>
                    <div class="rebar">
                        <table>
                            <colgroup>
                                <col><col><col><col><col><col><col><col><col><col><col><col><col><col><col><col><col>
                            </colgroup>
                            <thead>
                                <tr>
                                    <th></th><th class="current">筋号</th><th>直径(mm)</th><th>级别</th><th>图号</th><th>图形</th><th>计算公式</th><th>公式描述</th><th>长度</th><th>根数</th><th>搭接</th><th>损耗(%)</th><th>单重(kg)</th><th>总重(kg)</th><th>钢筋归类</th><th>搭接形式</th><th>钢筋类型</th>
                                </tr>
                            </thead>
                            <tbody>
                                <tr><th class="current">1</th><td class="current"></td><td></td><td></td><td></td><td></td><td></td><td></td><td></td><td></td><td></td><td></td><td></td><td></td><td></td><td></td><td></td></tr>
                                <tr><th>2</th><td></td><td></td><td></td><td></td><td></td><td></td><td></td><td></td><td></td><td></td><td></td><td></td><td></td><td></td><td></td><td></td></tr>
                                <tr><th>3</th><td></td><td></td><td></td><td></td><td></td><td></td><td></td><td></td><td></td><td></td><td></td><td></td><td></td><td></td><td></td><td></td></tr>
                                <tr><th>4</th><td></td><td></td><td></td><td></td><td></td><td></td><td></td><td></td><td></td><td></td><td></td><td></td><td></td><td></td><td></td><td></td></tr>
                                <tr><th>5</th><td></td><td></td><td></td><td></td><td></td><td></td><td></td><td></td><td></td><td></td><td></td><td></td><td></td><td></td><td></td><td></td></tr>
                            </tbody>
                        </table>
                    </div>
                </div>
            </div>
        </div>
    </section>

    <div class="ball">26</div>

    <!-- tutorial arrows -->
    <svg class="arrows" width="1100" height="640" viewBox="0 0 1100 640">
        <path d="M293 223L318 52l-4-1 10-14 6 16-5 0-31 170z"/>
        <path d="M543 221L593 111l-5-2 15-12 0 19-4-3-55 108z"/>
        <path d="M325 329L404 221l-5-3 15-6-1 17-4-4-83 105z"/>
        <path d="M127 394L151 323l-4-1 13-11 1 17-4-2-29 68z"/>
        <path d="M307 533L401 444l-4-3 19-4-7 14-4-3-97 86z"/>
        <path d="M651 591L598 525l-4 3-3-18 16 9-5 2 50 69z"/>
        <path d="M921 608L1041 546l-2-5 18 0-11 14-3-4-122 57z"/>
    </svg>
</body>
</html>
```
FILE: styles.css
```
* {
    box-sizing: border-box;
}

body {
    margin: 0;
    height: 100vh;
    overflow: hidden;
    position: relative;
    font-family: "Noto Sans", "Noto Sans CJK SC", sans-serif;
    font-size: 12px;
    line-height: 16px;
    color: #000;
    background-color: #dcdee2;
}

button {
    display: flex;
    align-items: center;
    padding: 0;
    border: none;
    background: none;
    font: inherit;
    color: inherit;
    white-space: nowrap;
}

button svg,
li svg,
.node svg {
    width: 16px;
    height: 16px;
    flex: none;
}

h1,
h2 {
    margin: 0;
    font-size: 12px;
    font-weight: normal;
}

ul {
    margin: 0;
    padding: 0;
    list-style: none;
}

.defs {
    display: none;
}

.app {
    display: flex;
    flex-direction: column;
    height: 100%;
}

.caret {
    width: 0;
    height: 0;
    border: 3px solid transparent;
    border-top-color: #444;
    border-bottom: none;
}

.caret.pale {
    border-top-color: #aaa;
}

.caret.lined {
    position: relative;
}

.caret.lined::before {
    content: "";
    position: absolute;
    left: -3px;
    top: -6px;
    width: 6px;
    height: 1px;
    background-color: #555;
}

/* header */
.float-shadow {
    position: absolute;
    top: -8px;
    height: 8px;
    box-shadow: 0 1px 4px #888;
}

.shadow-left {
    left: 619px;
    width: 402px;
}

.shadow-right {
    left: 1383px;
    width: 276px;
}

.header {
    display: flex;
    height: 41px;
    background-color: #fff;
    border-bottom: 1px solid #d2d3d6;
}

.logo {
    width: 46px;
    padding: 4px 0 0 8px;
    border-right: 1px solid #dedfe1;
}

.logo svg {
    width: 32px;
    height: 32px;
}

.header-main {
    flex: 1;
    min-width: 0;
}

.title-row {
    display: flex;
    height: 22px;
    align-items: center;
}

.quick {
    flex: 1;
    display: flex;
    align-items: center;
    gap: 7px;
    padding-left: 8px;
}

.quick .caret {
    margin-right: 1px;
}

.window-buttons {
    flex: 1;
    display: flex;
    justify-content: flex-end;
    gap: 26px;
    padding-left: 32px;
    margin-right: -5px;
    color: #666;
}

.window-buttons svg,
.dialog-buttons svg {
    width: 10px;
    height: 10px;
}

.title-row .title {
    white-space: nowrap;
}

.tab-row {
    display: flex;
    justify-content: space-between;
}

.tabs {
    display: flex;
    padding-left: 4px;
}

.tabs a {
    padding: 0 13px;
    line-height: 19px;
    color: #333;
    text-decoration: none;
}

.tabs .active {
    color: #fff;
    background-color: #5aa2f5;
}

.user-tools {
    display: flex;
    align-items: center;
    gap: 8px;
}

.user-tools button svg {
    width: auto;
}

.user-name {
    margin: 0 4px 0 -5px;
}

.search {
    width: 137px;
    height: 18px;
    margin-left: -4px;
    padding: 0 2px;
    border: 1px solid #999;
    border-right: none;
    font: inherit;
    font-size: 11px;
}

.search::placeholder {
    color: #777;
}

/* ribbon */
.ribbon {
    display: flex;
    height: 98px;
    background: linear-gradient(#fff 45%, #e6eaeb);
    border-bottom: 1px solid #8f9194;
}

.group {
    display: flex;
    flex-direction: column;
    justify-content: space-between;
    margin: 2px 0;
    padding: 5px 10px 0 11px;
    border-right: 1px solid #cdd0d2;
}

.group.first {
    padding-left: 12px;
    padding-right: 11px;
}

.group.wide {
    padding-left: 10px;
    padding-right: 19px;
}

.tools {
    display: flex;
    gap: 10px;
}

.tools button {
    flex-direction: column;
    gap: 8px;
}

.tools button svg {
    width: 28px;
    height: 28px;
}

.tools button:disabled {
    color: #b2b4b7;
}

.group h2 {
    text-align: center;
    white-space: nowrap;
}

/* floor / component selectors */
.context-bar {
    display: flex;
    gap: 5px;
    height: 29px;
    padding: 3px;
    background-color: #c9ccd1;
    border-bottom: 1px solid #8f9194;
}

.combo {
    position: relative;
    width: 100px;
    height: 23px;
}

.combo::after {
    content: "";
    position: absolute;
    right: 5px;
    top: 10px;
    border: 3px solid transparent;
    border-top-color: #444;
    border-bottom: none;
}

.combo select {
    appearance: none;
    width: 100%;
    height: 100%;
    padding: 0 3px;
    border: 1px solid #a5a8ac;
    border-radius: 0;
    background-color: #fff;
    color: #000;
    font: inherit;
}

.combo.small {
    width: 55px;
}

/* component navigation */
.workspace {
    flex: 1;
    min-height: 0;
    display: flex;
    padding-bottom: 3px;
}

.sidebar {
    width: 184px;
    overflow: hidden;
    background-color: #fff;
    border-left: 1px solid #b9bcc2;
    border-bottom: 1px solid #b9bcc2;
}

.sidebar-head {
    display: flex;
    align-items: flex-start;
    gap: 5px;
    height: 28px;
    padding: 1px 5px;
    background-color: #f0f0f0;
    border-bottom: 1px solid #c5c7cf;
}

.sidebar-head svg {
    margin: 5px 95px 0 0;
}

.mode {
    width: 24px;
    height: 22px;
    border: 1px solid #5aa2f5;
    border-radius: 3px;
    background-color: #dcebfc;
}

.categories {
    display: flex;
    flex-direction: column;
    padding-top: 4px;
}

.categories li {
    display: flex;
    align-items: center;
    height: 24px;
    gap: 4px;
    padding-left: 4px;
    white-space: nowrap;
}

.categories .sub {
    height: 22px;
    margin: 1px 0 1px 20px;
    gap: 6px;
}

.categories .selected {
    background-color: #c5d5ee;
}

.list-panel {
    width: 421px;
    margin-left: 4px;
    background-color: #d3d5dc;
}

.model-view {
    flex: 1;
    min-width: 0;
    overflow: hidden;
    background-color: #000;
    border-left: 4px solid #fff;
    border-right: 13px solid #444;
}

.model-view svg {
    display: block;
}

/* dialog window */
.dialog {
    position: absolute;
    left: 85px;
    right: 0;
    top: 173px;
    bottom: 1px;
    display: flex;
    flex-direction: column;
    overflow: hidden;
    background-color: #f0f0f0;
    border-left: 1px solid #c2c5d2;
    border-bottom: 1px solid #c2c5d2;
}

.dialog-title {
    display: flex;
    justify-content: space-between;
    align-items: center;
    height: 27px;
    padding-left: 7px;
    color: #fff;
    background-color: #2c7fe1;
}

.dialog-buttons {
    display: flex;
    gap: 18px;
    margin-right: -1px;
}

.dialog-tools {
    display: flex;
    align-items: center;
    height: 27px;
    padding-left: 2px;
    background-color: #fff;
    border-top: 1px solid #c5c7cf;
    border-bottom: 1px solid #c5c7cf;
    color: #333;
}

.dialog-tools button {
    gap: 4px;
    height: 23px;
    padding: 0 4px 0 5px;
}

.dialog-tools .caret {
    margin-left: 3px;
}

.dialog-tools .on {
    gap: 5px;
    padding: 0 6px 0 4px;
    color: #1a73d8;
    background-color: #cce4fc;
    border: 1px solid #5aa2f5;
    border-radius: 3px;
}

.dialog-tools .lone {
    padding-right: 8px;
}

.dialog-body {
    flex: 1;
    min-height: 0;
    display: flex;
    gap: 14px;
    padding: 9px 0 9px 9px;
}

.box {
    background-color: #fff;
    border: 1px solid #c2c5ca;
}

.left-col {
    display: flex;
    flex-direction: column;
    width: 280px;
    padding-top: 6px;
}

.node-tools {
    display: flex;
    align-items: center;
    gap: 12px;
    height: 26px;
    padding: 0 2px 0 7px;
    color: #333;
}

.node-tools button {
    gap: 4px;
}

.more {
    margin-left: auto;
}

.comp-tree {
    flex: 421 0 0;
    min-height: 0;
    margin: 6px 0 5px;
}

.node {
    display: flex;
    align-items: center;
    height: 21px;
    gap: 5px;
}

.node .twist,
.atlas .twist {
    width: 8px;
    height: 10px;
}

.node.root {
    padding-left: 9px;
    gap: 6px;
}

.node.child {
    width: 81px;
    margin-left: 40px;
    padding-left: 4px;
    background-color: #c9d8ef;
}

.props {
    flex: 301 0 0;
    min-height: 0;
    background: linear-gradient(#f0f0f0, #f0f0f0) 7px 0 / 100% 21px no-repeat,
        linear-gradient(#f0f0f0, #f0f0f0) 0 21px / 7px 100% no-repeat #fff;
}

table {
    table-layout: fixed;
    border-collapse: collapse;
}

th,
td {
    height: 21px;
    padding: 0;
    line-height: 18px;
    border: 1px solid #c4c4c4;
    border-top: none;
    border-left: none;
    white-space: nowrap;
}

th {
    font-weight: normal;
    color: #333;
}

thead th {
    border-color: #cfcfcf;
}

tbody th {
    border-bottom: none;
}

th:first-child {
    border-right: none;
}

thead th:first-child {
    border: none;
}

.props table {
    width: 208px;
}

.props td {
    padding-left: 3px;
}

.c-no {
    width: 6px;
}

.c-name,
.c-value {
    width: 101px;
}

/* right side */
.right-col {
    flex: 1;
    min-width: 0;
    display: flex;
    flex-direction: column;
}

.upper {
    flex: 460 0 0;
    min-height: 0;
    display: flex;
    gap: 6px;
}

fieldset {
    display: flex;
    flex-direction: column;
    min-width: 0;
    margin: 0;
    padding: 1px 5px 5px 6px;
    border: 1px solid #c5c7cf;
    border-radius: 4px;
    background-color: #fff;
}

legend {
    margin-left: 3px;
    padding: 0 2px;
    line-height: 12px;
}

.atlas {
    width: 300px;
}

.atlas-box {
    flex: 1;
    min-height: 0;
    display: flex;
    overflow: hidden;
    border: 1px solid #c2c5ca;
}

.atlas ul {
    flex: 1;
    padding-top: 4px;
}

.atlas li {
    display: flex;
    align-items: center;
    gap: 6px;
    height: 24px;
    padding-left: 10px;
}

.atlas li.leaf {
    padding-left: 40px;
}

.leaf span {
    display: flex;
    align-items: center;
    gap: 5px;
    height: 21px;
    padding-left: 5px;
}

.leaf.selected span {
    width: 155px;
    background-color: #c9d8ef;
}

.scroll {
    width: 13px;
    padding: 33px 5px 83px 0;
}

.thumb {
    height: 100%;
    border-radius: 4px;
    background-color: #cdcdcd;
}

.figure {
    flex: 1;
    padding: 0 0 4px 5px;
    border-right: none;
    border-radius: 4px 0 0 4px;
}

.figure-head {
    display: flex;
    justify-content: flex-end;
    align-items: flex-start;
    gap: 6px;
    height: 32px;
    line-height: 26px;
}

.primary {
    height: 26px;
    padding: 0 13px 0 16px;
    color: #fff;
    background-color: #2c7fe1;
    border-radius: 3px 0 0 3px;
}

.canvas {
    flex: 1;
    min-height: 0;
    overflow: hidden;
    background-color: #000;
}

/* pile drawing */
.cad {
    display: block;
    font-family: "Noto Sans CJK SC", sans-serif;
    shape-rendering: crispEdges;
}

.cad path,
.cad circle {
    fill: none;
}

.cad .w {
    stroke: #fff;
}

.cad .y {
    stroke: #ff0;
}

.cad .r {
    stroke: #f00;
}

.cad .dot {
    fill: #fff;
    stroke: none;
}

.note {
    fill: #fff;
    font-size: 8px;
}

.note .unit {
    font-size: 6px;
}

.value {
    fill: #0f0;
    font-size: 9px;
}

.value .sign {
    font-size: 7px;
    font-style: italic;
}

/* rebar table */
.lower {
    flex: 291 0 0;
    min-height: 0;
    display: flex;
    flex-direction: column;
    gap: 5px;
    padding-left: 8px;
    margin-top: 15px;
}

.row-tools {
    display: flex;
    align-items: center;
    gap: 13px;
    height: 27px;
    flex: none;
    padding-left: 4px;
    border-right: none;
}

.row-tools .arrow {
    width: 8px;
    justify-content: center;
}

.row-tools button:disabled {
    color: #a9abae;
}

.row-tools .caret {
    margin-left: 7px;
}

.rebar {
    flex: 1;
    min-height: 0;
    overflow: hidden;
    border: 1px solid #c2c5ca;
    border-top-color: #7f878f;
    border-left-color: #7f878f;
    border-right: none;
    background: linear-gradient(#f0f0f0, #f0f0f0) 0 0 / 100% 20px no-repeat,
        linear-gradient(#f0f0f0, #f0f0f0) 0 0 / 7px 100% no-repeat #fff;
}

.rebar table {
    width: 1253px;
}

.rebar thead th {
    height: 20px;
}

.rebar col:nth-child(1) { width: 7px; }
.rebar col:nth-child(2) { width: 73px; }
.rebar col:nth-child(3) { width: 57px; }
.rebar col:nth-child(4) { width: 35px; }
.rebar col:nth-child(5) { width: 33px; }
.rebar col:nth-child(6) { width: 201px; }
.rebar col:nth-child(7) { width: 167px; }
.rebar col:nth-child(8) { width: 60px; }
.rebar col:nth-child(9) { width: 39px; }
.rebar col:nth-child(10) { width: 39px; }
.rebar col:nth-child(11) { width: 48px; }
.rebar col:nth-child(12) { width: 61px; }
.rebar col:nth-child(13) { width: 62px; }
.rebar col:nth-child(14) { width: 70px; }
.rebar col:nth-child(15) { width: 74px; }
.rebar col:nth-child(16) { width: 71px; }
.rebar col:nth-child(17) { width: 156px; }

.rebar .current {
    font-weight: bold;
    color: #000;
    background-color: #ffecb0;
}

.rebar thead .current {
    border-bottom: 2px solid #6fa8e4;
}

.rebar td.current {
    background-color: #bfd0ef;
}

/* floating ball */
.ball {
    position: absolute;
    left: -27px;
    bottom: 46px;
    width: 47px;
    height: 47px;
    padding-right: 4px;
    border: 2px solid #d8dcd8;
    border-radius: 50%;
    background: linear-gradient(#7be08a, #2fbf4c);
    box-shadow: 1px 3px 6px #999, inset 0 0 0 1px #2f8f45;
    color: #fff;
    font-weight: bold;
    line-height: 43px;
    text-align: right;
}

.arrows {
    position: absolute;
    left: 0;
    top: 0;
    pointer-events: none;
    fill: #f31cf3;
    stroke: #f31cf3;
}
```
